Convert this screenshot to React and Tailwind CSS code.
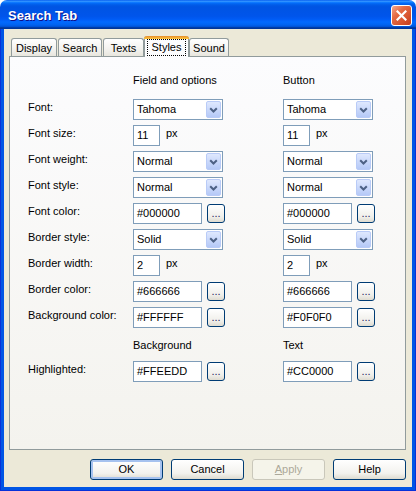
import React from "react";

// Small blue-grey chevron used inside the combo arrow button.
const Chevron = () => (
  <svg width="9" height="6" viewBox="0 0 9 6">
    <path d="M1.2 1.2 L4.5 4.5 L7.8 1.2" fill="none" stroke="#4D6185" strokeWidth="2" />
  </svg>
);

const Combo = ({ value }) => (
  <div className="flex h-[21px] w-[90px] items-center border border-[#7F9DB9] bg-white">
    <span className="flex-1 pl-[3px]">{value}</span>
    <span className="mr-[1px] flex h-[17px] w-[15px] items-center justify-center rounded-[2px] border border-[#B9CBF7] bg-[linear-gradient(to_bottom,#DFE8FE,#B5C9F7)]">
      <Chevron />
    </span>
  </div>
);

const DotsButton = () => (
  <button className="ml-[5px] flex h-[19px] w-[18px] items-center justify-center rounded-[3px] border border-[#003C74] bg-[linear-gradient(to_bottom,#FFFFFF,#F0EFEA_70%,#DEDBD0)] text-[11px] leading-[13px] text-[#1F1F5A]">
    ...
  </button>
);

const ColorField = ({ value }) => (
  <div className="flex items-center">
    <div className="flex h-[21px] w-[69px] items-center border border-[#7F9DB9] bg-white pl-[3px]">
      {value}
    </div>
    <DotsButton />
  </div>
);

const SizeField = ({ value }) => (
  <div className="flex">
    <div className="flex h-[21px] w-[27px] items-center border border-[#7F9DB9] bg-white pl-[3px]">
      {value}
    </div>
    <span className="ml-[6px] pt-[2px] leading-[13px]">px</span>
  </div>
);

const Cell = ({ field }) => {
  if (field.type === "combo") return <Combo value={field.value} />;
  if (field.type === "size") return <SizeField value={field.value} />;
  return <ColorField value={field.value} />;
};

// Rows of the styles grid: label, field column, button column.
const rows = [
  { label: "Font:", a: { type: "combo", value: "Tahoma" }, b: { type: "combo", value: "Tahoma" } },
  { label: "Font size:", a: { type: "size", value: "11" }, b: { type: "size", value: "11" } },
  { label: "Font weight:", a: { type: "combo", value: "Normal" }, b: { type: "combo", value: "Normal" } },
  { label: "Font style:", a: { type: "combo", value: "Normal" }, b: { type: "combo", value: "Normal" } },
  { label: "Font color:", a: { type: "color", value: "#000000" }, b: { type: "color", value: "#000000" } },
  { label: "Border style:", a: { type: "combo", value: "Solid" }, b: { type: "combo", value: "Solid" } },
  { label: "Border width:", a: { type: "size", value: "2" }, b: { type: "size", value: "2" } },
  { label: "Border color:", a: { type: "color", value: "#666666" }, b: { type: "color", value: "#666666" } },
  { label: "Background color:", a: { type: "color", value: "#FFFFFF" }, b: { type: "color", value: "#F0F0F0" } },
];

const Row = ({ label, a, b }) => (
  <div className="flex h-[21px] items-start">
    <div className="w-[105px] pt-[2px] leading-[13px]">{label}</div>
    <div className="flex h-[21px] w-[150px] items-center">
      <Cell field={a} />
    </div>
    <div className="flex h-[21px] items-center">
      <Cell field={b} />
    </div>
  </div>
);

const tabs = [
  { name: "Display", w: "w-[46px]", ml: "ml-[2px]" },
  { name: "Search", w: "w-[44px]", ml: "ml-[1px]" },
  { name: "Texts", w: "w-[41px]", ml: "ml-[1px]" },
  { name: "Styles", w: "w-[45px]", ml: "ml-0", active: true },
  { name: "Sound", w: "w-[40px]", ml: "ml-0" },
];

const Tab = ({ tab }) =>
  tab.active ? (
    <div className={`relative z-10 -mb-px flex h-[21px] flex-col rounded-t-[3px] border-x border-[#919B9C] bg-[#FCFCFE] ${tab.w} ${tab.ml}`}>
      <div className="-mx-px h-[3px] rounded-t-[3px] bg-[linear-gradient(to_bottom,#E68B2C,#FFC83C)]" />
      <div className="flex flex-1 px-[2px] pb-[1px]">
        <span className="flex flex-1 items-center justify-center border border-dotted border-black leading-[13px]">
          {tab.name}
        </span>
      </div>
    </div>
  ) : (
    <div className={`flex h-[18px] items-center justify-center rounded-t-[3px] border-x border-t border-[#919B9C] bg-[linear-gradient(to_bottom,#FFFFFF,#F3F2EE_60%,#E8E6DE)] pt-[1px] leading-[13px] ${tab.w} ${tab.ml}`}>
      {tab.name}
    </div>
  );

const DlgButton = ({ children, focused, disabled }) => (
  <button
    className={`flex h-[21px] w-[73px] items-center justify-center rounded-[3px] border leading-[13px] ${
      disabled
        ? "border-[#C9C7BA] bg-[#F5F4EA] text-[#ACA899]"
        : "border-[#003C74] bg-[linear-gradient(to_bottom,#FFFFFF,#F3F2EE_70%,#DEDBD0)] text-black"
    } ${focused ? "shadow-[inset_0_0_0_2px_#A6C2EF]" : ""}`}
  >
    {children}
  </button>
);

const CloseIcon = () => (
  <svg width="11" height="11" viewBox="0 0 11 11">
    <path d="M1.5 1.5 L9.5 9.5 M9.5 1.5 L1.5 9.5" stroke="#FFFFFF" strokeWidth="2.2" strokeLinecap="square" />
  </svg>
);

export default function App() {
  return (
    <div className="flex h-[491px] w-[416px] flex-col font-['Liberation_Sans',Arial,sans-serif] text-[11px] text-black">
      {/* Title bar */}
      <div className="flex h-[29px] items-center justify-between rounded-t-[7px] bg-[linear-gradient(to_bottom,#0058EE_0%,#3593FF_4%,#288EFF_6%,#127DFF_8%,#036FFC_10%,#0262EE_14%,#0057E5_20%,#0054E3_24%,#0055EB_56%,#005BF5_66%,#026AFE_76%,#0062EF_86%,#0052D6_92%,#0040AB_94%,#003092_100%)] pl-[8px] pr-[4px]">
        <span className="mt-[2px] text-[13px] font-bold text-white [text-shadow:1px_1px_#0F1089]">Search Tab</span>
        <div className="mt-[2px] flex h-[21px] w-[21px] items-center justify-center rounded-[3px] border border-white bg-[linear-gradient(135deg,#F4A88F_0%,#E56B44_35%,#D6522D_70%,#C23C1E_100%)]">
          <CloseIcon />
        </div>
      </div>

      {/* Window frame */}
      <div className="flex flex-1 flex-col border-x border-b border-[#0831D9] bg-[#0055E5] px-[3px] pb-[3px]">
        <div className="flex flex-1 flex-col bg-[#ECE9D8] pl-[5px] pr-[6px] pt-[7px]">
          {/* Tabs */}
          <div className="flex h-[20px] items-end">
            {tabs.map((t) => (
              <Tab key={t.name} tab={t} />
            ))}
          </div>

          {/* Tab page */}
          <div className="flex h-[394px] flex-col border border-[#919B9C] bg-[linear-gradient(to_bottom,#FCFCFE,#F4F3EE)] pl-[18px] pt-[17px]">
            <div className="flex leading-[13px]">
              <div className="w-[105px]" />
              <div className="w-[150px]">Field and options</div>
              <div>Button</div>
            </div>

            <div className="mt-[12px] flex flex-col gap-[5px]">
              {rows.map((r) => (
                <Row key={r.label} {...r} />
              ))}
            </div>

            <div className="mt-[11px] flex leading-[13px]">
              <div className="w-[105px]" />
              <div className="w-[150px]">Background</div>
              <div>Text</div>
            </div>

            <div className="mt-[9px]">
              <Row
                label="Highlighted:"
                a={{ type: "color", value: "#FFEEDD" }}
                b={{ type: "color", value: "#CC0000" }}
              />
            </div>
          </div>

          {/* Dialog buttons */}
          <div className="mt-[9px] flex justify-end gap-[8px]">
            <DlgButton focused>OK</DlgButton>
            <DlgButton>Cancel</DlgButton>
            <DlgButton disabled>
              <span className="underline">A</span>pply
            </DlgButton>
            <DlgButton>Help</DlgButton>
          </div>
        </div>
      </div>
    </div>
  );
}
